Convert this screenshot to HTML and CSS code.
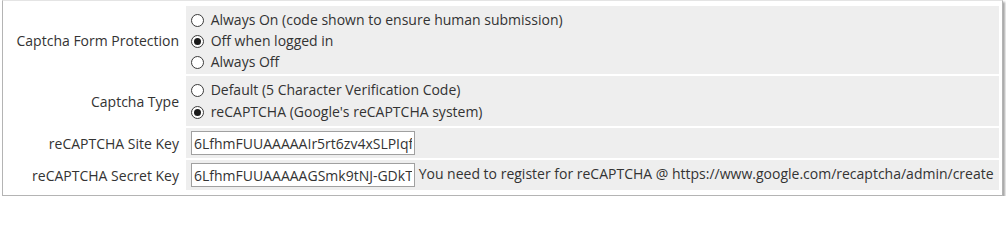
FILE: index.html
```html
<!DOCTYPE html>
<html>
<head>
<meta charset="utf-8">
<link rel="stylesheet" href="styles.css">
</head>
<body>
<div class="panel">
  <table class="form">
    <tr class="row-protect">
      <td class="label">Captcha Form Protection</td>
      <td class="value">
        <label class="opt"><input type="radio" name="prot" class="radio"> Always On (code shown to ensure human submission)</label>
        <label class="opt"><input type="radio" name="prot" class="radio" checked> Off when logged in</label>
        <label class="opt"><input type="radio" name="prot" class="radio"> Always Off</label>
      </td>
    </tr>
    <tr class="row-type">
      <td class="label">Captcha Type</td>
      <td class="value">
        <label class="opt"><input type="radio" name="type" class="radio"> Default (5 Character Verification Code)</label>
        <label class="opt"><input type="radio" name="type" class="radio" checked> reCAPTCHA (Google's reCAPTCHA system)</label>
      </td>
    </tr>
    <tr class="row-key">
      <td class="label">reCAPTCHA Site Key</td>
      <td class="value"><input type="text" class="key" value="6LfhmFUUAAAAAIr5rt6zv4xSLPIqfXbT1Qv0aZ"></td>
    </tr>
    <tr class="row-key">
      <td class="label">reCAPTCHA Secret Key</td>
      <td class="value"><input type="text" class="key" value="6LfhmFUUAAAAAGSmk9tNJ-GDkTqP7wLr2xYc"> You need to register for reCAPTCHA @ https://www.google.com/recaptcha/admin/create</td>
    </tr>
  </table>
</div>
</body>
</html>
```
FILE: styles.css
```css
html, body {
  margin: 0;
  padding: 0;
  background: #ffffff;
}
body {
  font-family: "Open Sans", "Liberation Sans", sans-serif;
  font-size: 14px;
  color: #333333;
}
.panel {
  margin: 0 0 0 2px;
  width: 1001px;
  height: 196px;
  box-sizing: border-box;
  border: 1px solid #b4b4b4;
  border-top-color: #e4e4e4;
  box-shadow: 2px 2px 2px rgba(0, 0, 0, 0.35);
  padding: 3px 1px 4px 1px;
  background: #ffffff;
}
.form {
  width: 100%;
  border-collapse: separate;
  border-spacing: 2px;
}
.form td {
  padding: 0;
}
.label {
  width: 173px;
  text-align: right;
  vertical-align: middle;
  padding-right: 5px !important;
  white-space: nowrap;
}
.value {
  background: #eeeeee;
  vertical-align: top;
  padding-left: 5px !important;
  white-space: nowrap;
}
.row-protect .value {
  padding-top: 3px !important;
  padding-bottom: 2px !important;
  height: 63px;
}
.row-protect .opt {
  display: block;
  height: 21px;
  line-height: 21px;
}
.row-type .value {
  padding-top: 3px !important;
  padding-bottom: 3px !important;
  height: 44px;
}
.row-type .opt {
  display: block;
  height: 22px;
  line-height: 22px;
}
.row-key .value {
  padding-top: 3px !important;
  padding-bottom: 3px !important;
  height: 24px;
}
.radio {
  -webkit-appearance: none;
  appearance: none;
  width: 13px;
  height: 13px;
  margin: 0 3px 0 0;
  border: 1px solid #3a3a3a;
  border-radius: 50%;
  background: #ffffff;
  box-sizing: border-box;
  vertical-align: -2px;
  position: relative;
}
.radio:checked::after {
  content: "";
  position: absolute;
  left: 2px;
  top: 2px;
  width: 7px;
  height: 7px;
  border-radius: 50%;
  background: #1a1a1a;
}
.key {
  width: 224px;
  height: 24px;
  box-sizing: border-box;
  border: 1px solid #a0a0a0;
  padding: 0 2px;
  margin: 0;
  font-family: "Open Sans", "Liberation Sans", sans-serif;
  font-size: 14px;
  color: #333333;
  background: #ffffff;
  vertical-align: middle;
  outline: none;
}
```
